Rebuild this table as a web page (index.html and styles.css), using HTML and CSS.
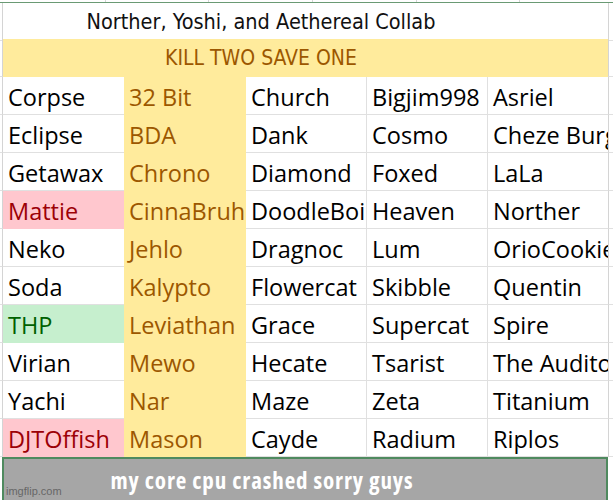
FILE: index.html
```html
<!DOCTYPE html>
<html>
<head>
<meta charset="utf-8">
<link rel="stylesheet" href="styles.css">
</head>
<body>
<div class="sheet">
  <div class="top"><span></span><span></span><span></span><span></span><span></span></div>

  <div class="row title-row">
    <div class="strip"></div>
    <div class="merged title">Norther, Yoshi, and Aethereal Collab</div>
    <div class="strip right"></div>
  </div>

  <div class="row head-row">
    <div class="strip"></div>
    <div class="merged head">KILL TWO SAVE ONE</div>
    <div class="strip right"></div>
  </div>

  <div class="row"><div class="strip"></div><div class="c a">Corpse</div><div class="c n">32 Bit</div><div class="c">Church</div><div class="c">Bigjim998</div><div class="c e">Asriel</div><div class="strip right"></div></div>
  <div class="row"><div class="strip"></div><div class="c a">Eclipse</div><div class="c n">BDA</div><div class="c">Dank</div><div class="c">Cosmo</div><div class="c e">Cheze Burger</div><div class="strip right"></div></div>
  <div class="row"><div class="strip"></div><div class="c a">Getawax</div><div class="c n">Chrono</div><div class="c">Diamond</div><div class="c">Foxed</div><div class="c e">LaLa</div><div class="strip right"></div></div>
  <div class="row"><div class="strip"></div><div class="c a bad">Mattie</div><div class="c n">CinnaBruh</div><div class="c">DoodleBoi</div><div class="c">Heaven</div><div class="c e">Norther</div><div class="strip right"></div></div>
  <div class="row"><div class="strip"></div><div class="c a">Neko</div><div class="c n">Jehlo</div><div class="c">Dragnoc</div><div class="c">Lum</div><div class="c e">OrioCookie</div><div class="strip right"></div></div>
  <div class="row"><div class="strip"></div><div class="c a">Soda</div><div class="c n">Kalypto</div><div class="c">Flowercat</div><div class="c">Skibble</div><div class="c e">Quentin</div><div class="strip right"></div></div>
  <div class="row"><div class="strip"></div><div class="c a good">THP</div><div class="c n">Leviathan</div><div class="c">Grace</div><div class="c">Supercat</div><div class="c e">Spire</div><div class="strip right"></div></div>
  <div class="row"><div class="strip"></div><div class="c a">Virian</div><div class="c n">Mewo</div><div class="c">Hecate</div><div class="c">Tsarist</div><div class="c e">The Auditor</div><div class="strip right"></div></div>
  <div class="row"><div class="strip"></div><div class="c a">Yachi</div><div class="c n">Nar</div><div class="c">Maze</div><div class="c">Zeta</div><div class="c e">Titanium</div><div class="strip right"></div></div>
  <div class="row"><div class="strip"></div><div class="c a bad">DJTOffish</div><div class="c n">Mason</div><div class="c">Cayde</div><div class="c">Radium</div><div class="c e">Riplos</div><div class="strip right"></div></div>

  <div class="banner">
    <span class="caption">my core cpu crashed sorry guys</span>
    <span class="watermark">imgflip.com</span>
  </div>
</div>
</body>
</html>
```

FILE: styles.css
```css
* { box-sizing: border-box; }
html, body { margin: 0; padding: 0; background: #fff; }
body { width: 613px; height: 500px; overflow: hidden; }

.sheet {
  width: 613px;
  font-family: "Open Sans", sans-serif;
  position: relative;
}

.top {
  height: 3px;
  border-bottom: 1px solid #6a9a74;
  display: grid;
  grid-template-columns: 106px 103px 104px 104px 103px 1fr;
}
.top span { border-right: 1px solid #d6d6d6; }

.row {
  display: grid;
  grid-template-columns: 3px 121px 122px 121px 121px 121px 4px;
  height: 38px;
}
.title-row { height: 36px; }

.strip {
  border-right: 1px solid #d4d4d4;
  border-bottom: 1px solid #e0e0e0;
}
.strip.right {
  border-right: none;
  border-left: 1px solid #d4d4d4;
  margin-left: -1px;
}

.merged {
  grid-column: 2 / 7;
  padding-right: 90px;
  text-align: center;
  white-space: nowrap;
  font-family: "DejaVu Sans Condensed", "DejaVu Sans", sans-serif;
  font-stretch: condensed;
}
.title {
  font-size: 21.5px;
  line-height: 38px;
  color: #111;
}
.head {
  background: #ffeb9c;
  color: #9c5700;
  font-size: 21px;
  line-height: 38px;
}

.c {
  font-size: 23.5px;
  line-height: 34px;
  padding: 3px 0 0 5px;
  white-space: nowrap;
  overflow: hidden;
  color: #000;
  border-right: 1px solid #e0e0e0;
  border-bottom: 1px solid #e0e0e0;
}
.c.a { border-right: none; }
.c.n {
  background: #ffeb9c;
  color: #9c5700;
  border: none;
}
.c.bad {
  background: #ffc7ce;
  color: #9c0006;
  border: none;
}
.c.good {
  background: #c6efce;
  color: #006100;
  border: none;
}
.c.e { border-right: none; }

.banner {
  position: relative;
  height: 43px;
  margin: 0 5px 0 2px;
  background: #a6a6a6;
  border: 2px solid #4f8a5f;
  border-bottom: none;
  padding-right: 86px;
  text-align: center;
}
.caption {
  display: block;
  font-family: "Open Sans", sans-serif;
  font-stretch: condensed;
  font-weight: bold;
  font-size: 23px;
  letter-spacing: 0.9px;
  line-height: 42px;
  color: #fff;
  white-space: nowrap;
}
.watermark {
  position: absolute;
  left: 2px;
  bottom: 3px;
  font-family: "Liberation Sans", Arial, sans-serif;
  font-size: 11px;
  color: #666;
}
```
